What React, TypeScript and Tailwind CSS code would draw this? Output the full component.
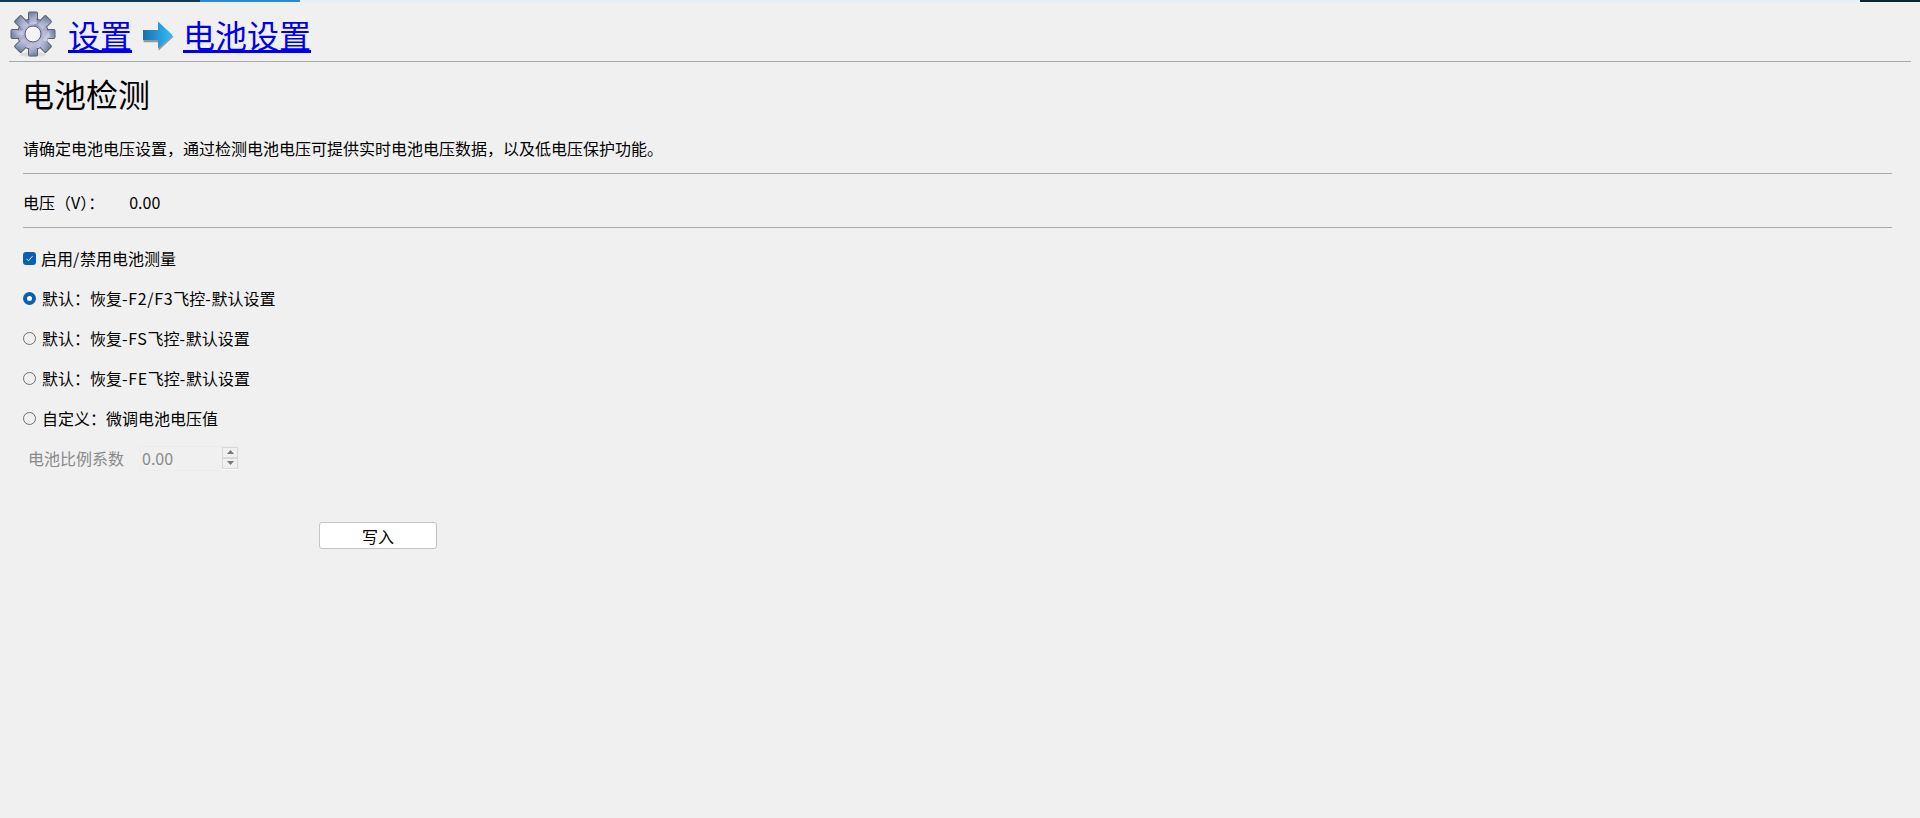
import type { ReactNode } from 'react';

const cjk = '"Microsoft YaHei", "Noto Sans CJK SC", "Liberation Sans", sans-serif';

function GearIcon() {
  const teeth = [0, 45, 90, 135, 180, 225, 270, 315];
  return (
    <svg width="48" height="48" viewBox="0 0 48 48" className="shrink-0">
      <defs>
        <linearGradient id="gearFill" x1="0.3" y1="0" x2="0.6" y2="1">
          <stop offset="0" stopColor="#76849f" />
          <stop offset="0.5" stopColor="#a5adcb" />
          <stop offset="1" stopColor="#c6c0e0" />
        </linearGradient>
      </defs>
      <ellipse cx="24" cy="44.500" rx="13" ry="2.500" fill="#dcdcdc" />
      <g stroke="#5a5c72" strokeWidth="1">
        {teeth.map((a) => (
          <rect key={a} x="19.500" y="2" width="9" height="10" rx="1" fill="url(#gearFill)" transform={`rotate(${a} 24 24)`} />
        ))}
        <circle cx="24" cy="24" r="15.500" fill="url(#gearFill)" />
      </g>
      {teeth.map((a) => (
        <rect key={a} x="20.500" y="3" width="7" height="11" fill="url(#gearFill)" transform={`rotate(${a} 24 24)`} />
      ))}
      <path d="M7 24c5-1 8-5 11-9 3-3 8-4 12-3-5 2-9 6-11 11-4 2-8 3-12 1z" fill="#c5cde2" opacity="0.55" />
      <path d="M33 30c3-2 5-5 6-9l2 4-3 7z" fill="#d8d8ea" opacity="0.6" />
      <circle cx="24" cy="24" r="8" fill="#f4f4f6" stroke="#5a5c72" strokeWidth="1" />
    </svg>
  );
}

function ArrowIcon() {
  return (
    <svg width="32" height="30" viewBox="0 0 32 30" className="block shrink-0">
      <defs>
        <linearGradient id="arrowFill" x1="0" y1="0" x2="1" y2="0">
          <stop offset="0" stopColor="#1b6fb0" />
          <stop offset="1" stopColor="#32bdfb" />
        </linearGradient>
      </defs>
      <path d="M1 9.500h15V1l15 14-15 14v-8.500H1z" fill="#8f9aa3" transform="translate(0.500 0.800)" />
      <path d="M1 9h15V0.500L30.500 14 16 27.500V19H1z" fill="url(#arrowFill)" />
    </svg>
  );
}

function Divider() {
  return <div className="h-px bg-[#a9a9a9]" />;
}

function Latin({ children }: { children: ReactNode }) {
  return <span className="tracking-[0.65px]">{children}</span>;
}

function RadioRow({ children, checked }: { children: ReactNode; checked?: boolean }) {
  return (
    <label className="flex h-10 items-center">
      <span
        className={`h-[13px] w-[13px] shrink-0 rounded-full ${
          checked ? 'border-[4px] border-[#0a5fb4] bg-white' : 'border border-[#6e6e6e] bg-[#f0f0f0]'
        }`}
      />
      <span className="ml-[6px] text-base">{children}</span>
    </label>
  );
}

export default function App() {
  return (
    <div className="min-h-[818px] bg-[#f0f0f0] text-black" style={{ fontFamily: cjk }}>
      <div className="flex h-[2px]">
        <div className="w-[200px] bg-[#123a56]" />
        <div className="w-[100px] bg-[#2a8bd3]" />
        <div className="flex-1 bg-[#e8eef7]" />
        <div className="w-[60px] bg-[#0c2530]" />
      </div>

      <div className="mx-[9px] flex h-[60px] items-center border-b border-[#a9a9a9] pt-[5px] text-[32px] leading-none">
        <GearIcon />
        <a href="#" className="ml-[11px] text-[#0000ee] underline">设置</a>
        <span className="ml-[10px] mr-[9px] mt-1"><ArrowIcon /></span>
        <a href="#" className="text-[#0000ee] underline">电池设置</a>
      </div>

      <div className="ml-[23px] mr-[28px] mt-[9px]">
        <h1 className="-ml-px text-[32px] leading-[44px]">电池检测</h1>
        <p className="mt-[23px] text-base leading-5">
          请确定电池电压设置，通过检测电池电压可提供实时电池电压数据，以及低电压保护功能。
        </p>
        <div className="mt-[15px]"><Divider /></div>
        <div className="flex h-[53px] items-center pt-[2px] text-base">
          <span>电压（V）：</span>
          <span className="ml-[25px]">0.00</span>
        </div>
        <Divider />

        <label className="mt-[10px] flex h-10 items-center">
          <span className="flex h-[13px] w-[13px] items-center justify-center rounded-[3px] bg-[#0a5fb4]">
            <svg width="9" height="9" viewBox="0 0 9 9" fill="none">
              <path d="M1.500 4.800l2 2 4-4.600" stroke="#dfe9f5" strokeWidth="1" />
            </svg>
          </span>
          <span className="ml-[5px] text-base">启用<Latin>/</Latin>禁用电池测量</span>
        </label>
        <RadioRow checked>默认：恢复<Latin>-F2/F3</Latin>飞控<Latin>-</Latin>默认设置</RadioRow>
        <RadioRow>默认：恢复<Latin>-FS</Latin>飞控<Latin>-</Latin>默认设置</RadioRow>
        <RadioRow>默认：恢复<Latin>-FE</Latin>飞控<Latin>-</Latin>默认设置</RadioRow>
        <RadioRow>自定义：微调电池电压值</RadioRow>

        <div className="flex h-[40px] items-center pl-[5px] text-base text-[#8a8a8a]">
          <span>电池比例系数</span>
          <div className="ml-4 flex h-[25px] w-[99px] items-center justify-between border border-[#ececec] pl-px">
            <span>0.00</span>
            <div className="flex h-[23px] w-4 flex-col bg-white">
              <span className="flex h-[11px] items-center justify-center border border-[#d8d8d8] bg-[#f0f0f0]">
                <svg width="7" height="4" viewBox="0 0 7 4"><path d="M3.500 0L7 4H0z" fill="#777" /></svg>
              </span>
              <span className="flex h-[11px] items-center justify-center border border-[#d8d8d8] bg-[#f0f0f0]">
                <svg width="7" height="4" viewBox="0 0 7 4"><path d="M3.500 4L7 0H0z" fill="#777" /></svg>
              </span>
            </div>
          </div>
        </div>

        <div className="mt-[44px] pl-[296px]">
          <button className="h-[27px] w-[118px] rounded-[3px] border border-[#c4c4c4] bg-white text-base">写入</button>
        </div>
      </div>
    </div>
  );
}
